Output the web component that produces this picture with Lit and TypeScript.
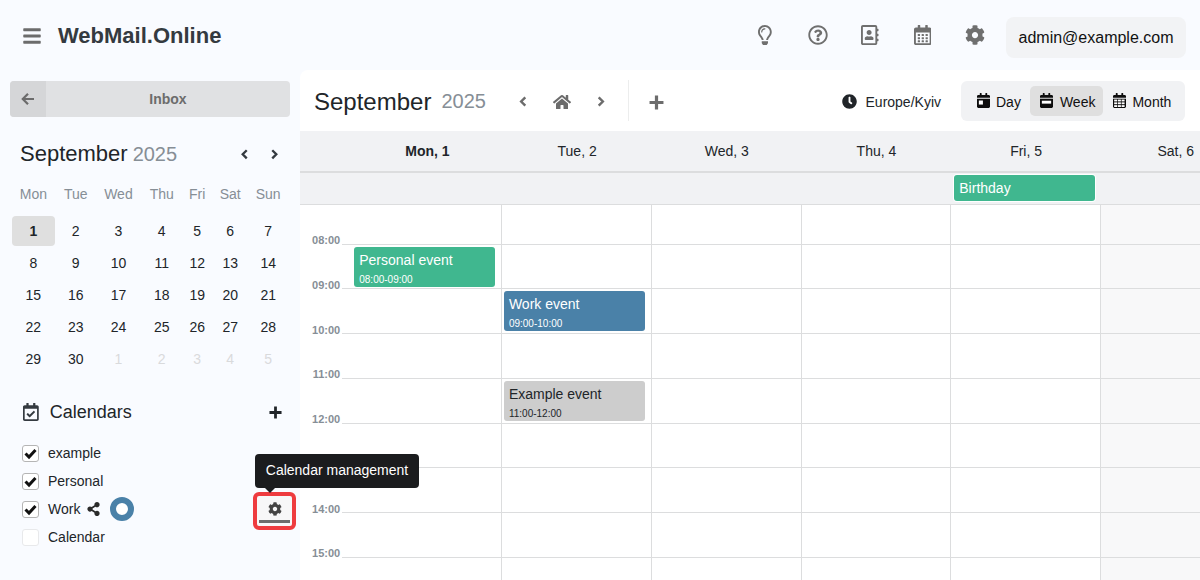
import { LitElement, html, css, svg } from "lit";
import { customElement } from "lit/decorators.js";

const P = {
  bars: "M16 132h416c8.837 0 16-7.163 16-16V76c0-8.837-7.163-16-16-16H16C7.163 60 0 67.163 0 76v40c0 8.837 7.163 16 16 16zm0 160h416c8.837 0 16-7.163 16-16v-40c0-8.837-7.163-16-16-16H16c-8.837 0-16 7.163-16 16v40c0 8.837 7.163 16 16 16zm0 160h416c8.837 0 16-7.163 16-16v-40c0-8.837-7.163-16-16-16H16c-8.837 0-16 7.163-16 16v40c0 8.837 7.163 16 16 16z",
  cog: "M487.4 315.7l-42.6-24.6c4.3-23.2 4.3-47 0-70.2l42.6-24.6c4.9-2.8 7.1-8.6 5.5-14-11.1-35.6-30-67.8-54.7-94.6-3.8-4.1-10-5.1-14.8-2.3L380.8 110c-17.9-15.4-38.5-27.3-60.8-35.1V25.8c0-5.6-3.9-10.5-9.4-11.7-36.7-8.2-74.3-7.8-109.2 0-5.5 1.2-9.4 6.1-9.4 11.7V75c-22.2 7.9-42.8 19.8-60.8 35.1L88.7 85.5c-4.9-2.8-11-1.9-14.8 2.3-24.7 26.7-43.6 58.9-54.7 94.6-1.7 5.4.6 11.2 5.5 14L67.3 221c-4.3 23.2-4.3 47 0 70.2l-42.6 24.6c-4.9 2.8-7.1 8.6-5.5 14 11.1 35.6 30 67.8 54.7 94.6 3.8 4.1 10 5.1 14.8 2.3l42.6-24.6c17.9 15.4 38.5 27.3 60.8 35.1v49.2c0 5.6 3.9 10.5 9.4 11.7 36.7 8.2 74.3 7.8 109.2 0 5.5-1.2 9.4-6.1 9.4-11.7v-49.2c22.2-7.9 42.8-19.8 60.8-35.1l42.6 24.6c4.9 2.8 11 1.9 14.8-2.3 24.7-26.7 43.6-58.9 54.7-94.6 1.5-5.5-.7-11.3-5.6-14.1zM256 336c-44.1 0-80-35.9-80-80s35.9-80 80-80 80 35.9 80 80-35.9 80-80 80z",
  home: "M280.37 148.26L96 300.11V464a16 16 0 0 0 16 16l112.06-.29a16 16 0 0 0 15.92-16V368a16 16 0 0 1 16-16h64a16 16 0 0 1 16 16v95.64a16 16 0 0 0 16 16.05L464 480a16 16 0 0 0 16-16V300L295.67 148.26a12.19 12.19 0 0 0-15.3 0zM571.6 251.47L488 182.56V44.05a12 12 0 0 0-12-12h-56a12 12 0 0 0-12 12v72.61L318.47 43a48 48 0 0 0-61 0L4.34 251.47a12 12 0 0 0-1.6 16.9l25.5 31A12 12 0 0 0 45.15 301l235.22-193.74a12.19 12.19 0 0 1 15.3 0L530.9 301a12 12 0 0 0 16.9-1.6l25.5-31a12 12 0 0 0-1.7-16.93z",
  share: "M352 320c-22.608 0-43.387 7.819-59.79 20.895l-102.486-64.054a96.551 96.551 0 0 0 0-41.683l102.486-64.054C308.613 184.181 329.392 192 352 192c53.019 0 96-42.981 96-96S405.019 0 352 0s-96 42.981-96 96c0 7.158.79 14.13 2.276 20.841L155.79 180.895C139.387 167.819 118.608 160 96 160c-53.019 0-96 42.981-96 96s42.981 96 96 96c22.608 0 43.387-7.819 59.79-20.895l102.486 64.054A96.301 96.301 0 0 0 256 416c0 53.019 42.981 96 96 96s96-42.981 96-96-42.981-96-96-96z",
  bulb: "M176 80c-52.94 0-96 43.06-96 96 0 8.84 7.16 16 16 16s16-7.16 16-16c0-35.3 28.72-64 64-64 8.84 0 16-7.16 16-16s-7.16-16-16-16zM96.06 459.17c0 3.15.93 6.22 2.68 8.84l24.51 36.84c2.97 4.46 7.97 7.14 13.32 7.14h78.85c5.36 0 10.36-2.68 13.32-7.14l24.51-36.84c1.74-2.62 2.67-5.7 2.68-8.84l.05-43.18H96.02l.04 43.18zM176 0C73.72 0 0 82.97 0 176c0 44.37 16.45 84.85 43.56 115.78 16.64 18.99 42.74 58.8 52.42 92.16v.06h48v-.12c-.01-4.77-.72-9.51-2.15-14.07-5.59-17.81-22.82-64.77-62.17-109.67-20.54-23.43-31.52-53.15-31.61-84.14-.2-73.64 59.67-128 127.95-128 70.58 0 128 57.42 128 128 0 30.97-11.24 60.85-31.65 84.14-39.11 44.61-56.42 91.47-62.1 109.46a47.507 47.507 0 0 0-2.22 14.3v.1h48v-.05c9.68-33.37 35.78-73.18 52.42-92.16C335.55 260.85 352 220.37 352 176 352 78.8 273.2 0 176 0z",
  help: "M256 8C119.043 8 8 119.083 8 256c0 136.997 111.043 248 248 248s248-111.003 248-248C504 119.083 392.957 8 256 8zm0 448c-110.532 0-200-89.431-200-200 0-110.495 89.472-200 200-200 110.491 0 200 89.471 200 200 0 110.53-89.431 200-200 200zm107.244-255.2c0 67.052-72.421 68.084-72.421 92.863V300c0 6.627-5.373 12-12 12h-45.647c-6.627 0-12-5.373-12-12v-8.659c0-35.745 27.1-50.034 47.579-61.516 17.561-9.845 28.324-16.541 28.324-29.579 0-17.246-21.999-28.693-39.784-28.693-23.189 0-33.894 10.977-48.942 29.969-4.057 5.12-11.46 6.071-16.666 2.124l-27.824-21.098c-5.107-3.872-6.251-11.066-2.644-16.363C184.846 131.491 214.94 112 261.794 112c49.071 0 101.45 38.304 101.45 88.8zM298 368c0 23.159-18.841 42-42 42s-42-18.841-42-42 18.841-42 42-42 42 18.841 42 42z",
  calTop: "M400 64h-48V16c0-8.8-7.2-16-16-16h-32c-8.8 0-16 7.2-16 16v48H160V16c0-8.8-7.2-16-16-16h-32c-8.8 0-16 7.2-16 16v48H48C21.5 64 0 85.5 0 112v48h448v-48c0-26.5-21.5-48-48-48z",
  calBody: "M0 192h448v272c0 26.5-21.5 48-48 48H48c-26.5 0-48-21.5-48-48z",
  clock: "M256 8C119 8 8 119 8 256s111 248 248 248 248-111 248-248S393 8 256 8zm92.49 313l-20 25a16 16 0 0 1-22.49 2.5l-67-49.72a40 40 0 0 1-15-31.23V112a16 16 0 0 1 16-16h32a16 16 0 0 1 16 16v144l58 42.5A16 16 0 0 1 348.49 321z",
};

const ico = (d: string, vb: string, cls: string) =>
  html`<svg class=${cls} viewBox=${vb} fill="currentColor" aria-hidden="true"><path d=${d}></path></svg>`;

const chevron = (dir: "l" | "r", cls: string) =>
  html`<svg class=${cls} viewBox="0 0 10 14" fill="none" stroke="currentColor" stroke-width="2.6" aria-hidden="true">
    <polyline points=${dir === "l" ? "7.5,2.5 3,7 7.5,11.5" : "2.5,2.5 7,7 2.5,11.5"}></polyline>
  </svg>`;

const plus = (cls: string) =>
  html`<svg class=${cls} viewBox="0 0 14 14" fill="none" stroke="currentColor" stroke-width="3" aria-hidden="true">
    <path d="M7 0.5V13.5M0.5 7H13.5"></path>
  </svg>`;

const solidCal = (inner: unknown) =>
  html`<svg class="seg-ico" viewBox="0 0 448 512" fill="currentColor" aria-hidden="true">
    <path d=${P.calTop}></path><path d=${P.calBody}></path>${inner}
  </svg>`;

const dayInner = svg`<rect x="64" y="256" width="140" height="140" fill="#fff"></rect>`;
const weekInner = svg`<rect x="64" y="264" width="320" height="100" fill="#fff"></rect>`;
const monthInner = svg`<g fill="#fff">
  ${[224, 320, 416].map((y) => [40, 168, 296].map((x) => svg`<rect x=${x} y=${y} width="104" height="64"></rect>`))}
</g>`;

const outlineCal = html`<svg class="i-top" viewBox="0 0 448 512" fill="currentColor" aria-hidden="true">
  <path d="M400 64h-48V12c0-6.600-5.400-12-12-12h-40c-6.600 0-12 5.400-12 12v52H160V12c0-6.600-5.400-12-12-12h-40c-6.600 0-12 5.400-12 12v52H48C21.500 64 0 85.500 0 112v352c0 26.500 21.500 48 48 48h352c26.500 0 48-21.500 48-48V112c0-26.500-21.500-48-48-48zm-6 400H54c-3.300 0-6-2.700-6-6V192h352v266c0 3.300-2.700 6-6 6z"></path>
  ${[232, 312, 392].map((y) => [96, 196, 296].map((x) => svg`<rect x=${x} y=${y} width="58" height="50" rx="8"></rect>`))}
</svg>`;

const addressBook = html`<svg class="i-top" viewBox="0 0 448 512" fill="currentColor" aria-hidden="true">
  <path d="M436 160c6.600 0 12-5.400 12-12v-40c0-6.600-5.400-12-12-12h-20V48c0-26.500-21.500-48-48-48H48C21.500 0 0 21.500 0 48v416c0 26.500 21.500 48 48 48h320c26.500 0 48-21.500 48-48v-48h20c6.600 0 12-5.400 12-12v-40c0-6.600-5.400-12-12-12h-20v-64h20c6.600 0 12-5.400 12-12v-40c0-6.600-5.400-12-12-12h-20v-64h20zm-68 304H48V48h320v416zM208 256c35.300 0 64-28.700 64-64s-28.700-64-64-64-64 28.700-64 64 28.700 64 64 64zm-89.600 128h179.200c12.400 0 22.400-8.600 22.400-19.200v-19.200c0-31.800-30.100-57.600-67.200-57.600-10.800 0-18.700 8-44.800 8-26.900 0-33.400-8-44.800-8-37.100 0-67.200 25.800-67.200 57.600v19.200c0 10.600 10 19.200 22.400 19.200z"></path>
</svg>`;

const calCheck = html`<svg class="cal-check" viewBox="0 0 448 512" fill="currentColor" aria-hidden="true">
  <path d="M400 64h-48V12c0-6.600-5.400-12-12-12h-40c-6.600 0-12 5.400-12 12v52H160V12c0-6.600-5.400-12-12-12h-40c-6.600 0-12 5.400-12 12v52H48C21.500 64 0 85.500 0 112v352c0 26.500 21.500 48 48 48h352c26.500 0 48-21.500 48-48V112c0-26.500-21.500-48-48-48zm-6 400H54c-3.300 0-6-2.700-6-6V160h352v298c0 3.300-2.700 6-6 6zm-52.800-200.100L198.100 405.900c-4.700 4.700-12.300 4.600-17 0l-74.400-75c-4.700-4.700-4.600-12.300 0-17l22.700-22.500c4.700-4.700 12.300-4.600 17 0l43.400 43.800 109.400-108.500c4.700-4.700 12.300-4.600 17 0l22.500 22.700c4.600 4.700 4.600 12.300-.1 17z"></path>
</svg>`;

const WEEKDAYS = ["Mon", "Tue", "Wed", "Thu", "Fri", "Sat", "Sun"];
const MONTH: [number, boolean][][] = [
  [1, 2, 3, 4, 5, 6, 7],
  [8, 9, 10, 11, 12, 13, 14],
  [15, 16, 17, 18, 19, 20, 21],
  [22, 23, 24, 25, 26, 27, 28],
].map((r) => r.map((d) => [d, false] as [number, boolean]));
MONTH.push([[29, false], [30, false], [1, true], [2, true], [3, true], [4, true], [5, true]]);

const DAY_HEADS = ["Mon, 1", "Tue, 2", "Wed, 3", "Thu, 4", "Fri, 5", "Sat, 6"];
const HOURS = ["08:00", "09:00", "10:00", "11:00", "12:00", "", "14:00", "15:00", ""];

interface Ev { hour: number; day: number; title: string; time: string; cls: string; }
const EVENTS: Ev[] = [
  { hour: 1, day: 0, title: "Personal event", time: "08:00-09:00", cls: "green" },
  { hour: 2, day: 1, title: "Work event", time: "09:00-10:00", cls: "blue" },
  { hour: 4, day: 1, title: "Example event", time: "11:00-12:00", cls: "grey" },
];

@customElement("app-root")
export class AppRoot extends LitElement {
  static styles = css`
    :host {
      display: block;
      width: 1200px;
      height: 580px;
      overflow: hidden;
      background: #f9fbff;
      color: #212529;
      font-family: "Liberation Sans", Arial, sans-serif;
      font-size: 14px;
    }
    svg { display: block; flex: none; }

    .top { height: 70px; display: flex; align-items: center; padding: 1px 14px 0 23px; box-sizing: border-box; }
    .burger { width: 18px; height: 20px; color: #6c6c6c; margin-right: 17px; }
    .brand { font-size: 22px; font-weight: 700; color: #343a40; }
    .top-icons { margin: -2px 0 0 auto; display: flex; align-items: center; color: #6f6f6f; }
    .top-icons .slot { width: 52.600px; display: flex; justify-content: center; }
    .i-top { height: 20px; width: auto; }
    .user {
      margin: 4px 0 0 4.400px; width: 180px; height: 41px; border-radius: 8px; background: #f2f3f5;
      display: flex; align-items: center; justify-content: center; font-size: 16px; color: #111;
    }

    .body { display: flex; height: 510px; }
    .side { width: 300px; flex: none; padding: 11px 10px 0; box-sizing: border-box; position: relative; z-index: 2; }
    .inbox { height: 36px; display: flex; background: #e0e1e3; border-radius: 4px; overflow: hidden; }
    .inbox .back { width: 36px; background: #d5d6d8; display: flex; align-items: center; justify-content: center; color: #6c6c6c; }
    .inbox .back svg { width: 14px; height: 14px; }
    .inbox .label { flex: 1; display: flex; align-items: center; justify-content: center; font-weight: 700; color: #6c6c6c; }

    .mini-head { display: flex; align-items: center; margin-top: 24px; padding: 0 10px; height: 26px; }
    .mini-head .m { font-size: 22px; color: #212529; }
    .mini-head .y { font-size: 20px; color: #868e96; margin-left: 5px; }
    .mini-nav { margin-left: auto; display: flex; gap: 21px; color: #343a40; padding-right: 1px; }
    .mini-nav svg { width: 9px; height: 12.600px; }

    .cal { display: grid; grid-template-columns: 42.700px 42px 43.500px 43px 28px 38px 38px; margin: 19px 0 0 2px; text-align: center; }
    .wd { color: #868e96; height: 17px; line-height: 17px; margin-bottom: 13px; }
    .d { height: 30px; line-height: 30px; margin-bottom: 2px; color: #212529; border-radius: 4px; }
    .d.sel { background: #dfdfdf; font-weight: 700; }
    .d.off { color: #d9dadc; }

    .cals-head { display: flex; align-items: center; height: 20px; margin-top: 26px; padding: 0 8px 0 13px; }
    .cal-check { height: 18px; width: auto; color: #343a40; }
    .cals-head .t { font-size: 18px; margin-left: 11px; color: #212529; }
    .cals-head .add { margin-left: auto; width: 13px; height: 13px; color: #212529; }

    .list { margin: 17px 0 0 12px; }
    .row { height: 28px; display: flex; align-items: center; }
    .box {
      width: 15px; height: 15px; border: 1px solid #b5b5b5; border-radius: 3px; background: #fff;
      display: flex; align-items: center; justify-content: center; margin-right: 9px; flex: none;
    }
    .box.empty { border-color: #e8e9eb; }
    .box svg { width: 13px; height: 13px; }
    .share { width: 13px; height: 14px; color: #2b2b2b; margin-left: 7px; }
    .ring { width: 12px; height: 12px; border: 6px solid #4a81a8; border-radius: 50%; background: #fff; margin-left: 10px; flex: none; }
    .mgr {
      position: relative; margin: -3px -6px -7px auto; width: 43px; height: 38px; box-sizing: border-box;
      border: 4px solid #ee3b3f; border-radius: 6px; background: #f7f7f8;
      display: flex; align-items: flex-start; justify-content: center; color: #444;
    }
    .mgr .gear { width: 14px; height: 14px; margin-top: 6px; }
    .mgr .bar { position: absolute; left: 2px; right: 2px; bottom: 3px; height: 3px; background: #6c6c6c; }
    .tip {
      position: absolute; left: -2px; top: -42px; height: 34px; width: 164px; background: #1b1c1e; color: #fff;
      border-radius: 4px; display: flex; align-items: center; justify-content: center; white-space: nowrap;
      padding-bottom: 2px; box-sizing: border-box;
    }
    .tip::after {
      content: ""; position: absolute; left: 10px; bottom: -5px;
      border: 5px solid transparent; border-bottom: 0; border-top-color: #1b1c1e;
    }

    .main { flex: 1; min-width: 0; background: #fff; border-top-left-radius: 8px; overflow: hidden; }
    .bar-top { height: 61px; display: flex; align-items: center; padding: 2px 15px 0 14px; box-sizing: border-box; }
    .bar-top .m { font-size: 24px; color: #212529; }
    .bar-top .y { font-size: 20px; color: #868e96; margin-left: 10px; }
    .nav { display: flex; align-items: center; color: #6c6c6c; margin-left: 32px; }
    .nav .chev { width: 10px; height: 13px; }
    .nav .home { width: 18px; height: 16px; margin: 0 25px 0 25px; }
    .sep { width: 1px; height: 41px; background: #eceded; margin: -2px 20px 0 22px; }
    .bar-top .add { width: 15px; height: 15px; color: #6c6c6c; margin-top: 1px; }
    .tz { margin-left: auto; display: flex; align-items: center; color: #212529; }
    .tz svg { width: 15px; height: 15px; margin-right: 9px; }
    .seg { margin: -2px 0 0 20px; width: 224px; height: 40px; background: #f1f2f4; border-radius: 6px; display: flex; align-items: center; padding-left: 9px; box-sizing: border-box; color: #111; }
    .seg .b { height: 30px; display: flex; align-items: center; padding: 0 7px; border-radius: 5px; gap: 6px; }
    .seg .b span { padding-top: 2px; }
    .seg .b.on { background: #dfdfdf; margin: 0 3px 0 0; padding: 0 8px 0 10px; gap: 7px; }
    .seg .b:first-child { padding-left: 7px; padding-right: 0; margin-right: 9px; }
    .seg-ico { width: 13px; height: 15px; color: #0d0d0d; }

    .cols { display: grid; grid-template-columns: 52.670px repeat(6, 149.670px); width: max-content; }
    .days { background: #f1f2f4; height: 42px; border-bottom: 2px solid #dcddde; box-sizing: border-box; }
    .days .c { display: flex; align-items: center; justify-content: center; height: 40px; color: #212529; }
    .days .c.today { font-weight: 700; }
    .allday { background: #f1f2f4; height: 32px; border-bottom: 1px solid #dcddde; box-sizing: border-box; }
    .allday .c { padding: 2px 6px 0 3px; }
    .bday {
      height: 26px; line-height: 26px; background: #40b78f; color: #fff; border-radius: 3px; padding-left: 5px;
      box-shadow: 0 0 0 1px #fff;
    }

    .hour { height: 44.750px; }
    .hour.first { height: 39.600px; }
    .gut { display: flex; align-items: flex-end; justify-content: flex-end; box-sizing: border-box; position: relative; }
    .gut .lb { position: absolute; right: 12.500px; bottom: -1.600px; font-size: 11px; line-height: 11px; font-weight: 700; color: #868e96; }
    .gut .tick { width: 10.670px; border-bottom: 1px solid #dcddde; }
    .cell { border-right: 1px solid #dcddde; border-bottom: 1px solid #dcddde; box-sizing: border-box; position: relative; }
    .cell.we { background: #f8f8f9; }
    .ev {
      position: absolute; left: 1.600px; right: 6px; top: 2px; height: 40px; border-radius: 3px;
      padding: 5px 5px 0; box-sizing: border-box; overflow: hidden; z-index: 1;
    }
    .ev .tt { line-height: 16px; }
    .ev .tm { font-size: 10px; line-height: 12px; margin-top: 6px; }
    .ev.green { background: #40b78f; color: #fff; }
    .ev.blue { background: #4a81a8; color: #fff; }
    .ev.grey { background: #cdcdcd; color: #212529; }
  `;

  render() {
    return html`
      <div class="top">
        ${ico(P.bars, "0 0 448 512", "burger")}
        <div class="brand">WebMail.Online</div>
        <div class="top-icons">
          <span class="slot">${ico(P.bulb, "0 0 352 512", "i-top")}</span>
          <span class="slot">${ico(P.help, "0 0 512 512", "i-top")}</span>
          <span class="slot">${addressBook}</span>
          <span class="slot">${outlineCal}</span>
          <span class="slot">${ico(P.cog, "0 0 512 512", "i-top")}</span>
        </div>
        <div class="user">admin@example.com</div>
      </div>
      <div class="body">
        <aside class="side">
          <div class="inbox">
            <div class="back">
              <svg viewBox="0 0 14 14" fill="none" stroke="currentColor" stroke-width="2.200" aria-hidden="true">
                <path d="M13 7H2M7 1.800L1.800 7 7 12.200"></path>
              </svg>
            </div>
            <div class="label">Inbox</div>
          </div>
          <div class="mini-head">
            <span class="m">September</span><span class="y">2025</span>
            <div class="mini-nav">${chevron("l", "")}${chevron("r", "")}</div>
          </div>
          <div class="cal">
            ${WEEKDAYS.map((w) => html`<div class="wd">${w}</div>`)}
            ${MONTH.flat().map(
              ([d, off], i) => html`<div class="d ${off ? "off" : ""} ${i === 0 ? "sel" : ""}">${d}</div>`
            )}
          </div>
          <div class="cals-head">
            ${calCheck}
            <span class="t">Calendars</span>
            ${plus("add")}
          </div>
          <div class="list">
            ${this.row("example", true)}
            ${this.row("Personal", true)}
            <div class="row">
              ${this.box(true)}<span>Work</span>
              ${ico(P.share, "0 0 448 512", "share")}
              <span class="ring"></span>
              <div class="mgr">
                <div class="tip">Calendar management</div>
                ${ico(P.cog, "0 0 512 512", "gear")}
                <span class="bar"></span>
              </div>
            </div>
            ${this.row("Calendar", false)}
          </div>
        </aside>
        <main class="main">
          <div class="bar-top">
            <span class="m">September</span><span class="y">2025</span>
            <div class="nav">
              ${chevron("l", "chev")}
              ${ico(P.home, "0 0 576 512", "home")}
              ${chevron("r", "chev")}
            </div>
            <span class="sep"></span>
            ${plus("add")}
            <div class="tz">${ico(P.clock, "0 0 512 512", "")}<span>Europe/Kyiv</span></div>
            <div class="seg">
              <div class="b">${solidCal(dayInner)}<span>Day</span></div>
              <div class="b on">${solidCal(weekInner)}<span>Week</span></div>
              <div class="b">${solidCal(monthInner)}<span>Month</span></div>
            </div>
          </div>
          <div class="cols days">
            <div></div>
            ${DAY_HEADS.map((d, i) => html`<div class="c ${i === 0 ? "today" : ""}">${d}</div>`)}
          </div>
          <div class="cols allday">
            <div></div>
            ${DAY_HEADS.map((_, i) => html`<div class="c">${i === 4 ? html`<div class="bday">Birthday</div>` : ""}</div>`)}
          </div>
          ${HOURS.map(
            (h, r) => html`<div class="cols hour ${r === 0 ? "first" : ""}">
              <div class="gut">
                ${h ? html`<span class="lb">${h}</span>` : ""}
                <span class="tick"></span>
              </div>
              ${DAY_HEADS.map((_, c) => {
                const e = EVENTS.find((v) => v.hour === r && v.day === c);
                return html`<div class="cell ${c === 5 ? "we" : ""}">
                  ${e ? html`<div class="ev ${e.cls}"><div class="tt">${e.title}</div><div class="tm">${e.time}</div></div>` : ""}
                </div>`;
              })}
            </div>`
          )}
        </main>
      </div>
    `;
  }

  box(on: boolean) {
    return html`<span class="box ${on ? "" : "empty"}">
      ${on
        ? html`<svg viewBox="0 0 13 13" fill="none" stroke="#111" stroke-width="3" aria-hidden="true"><polyline points="1.500,6.500 5,10 11.500,3"></polyline></svg>`
        : ""}
    </span>`;
  }

  row(label: string, on: boolean) {
    return html`<div class="row">${this.box(on)}<span>${label}</span></div>`;
  }
}
